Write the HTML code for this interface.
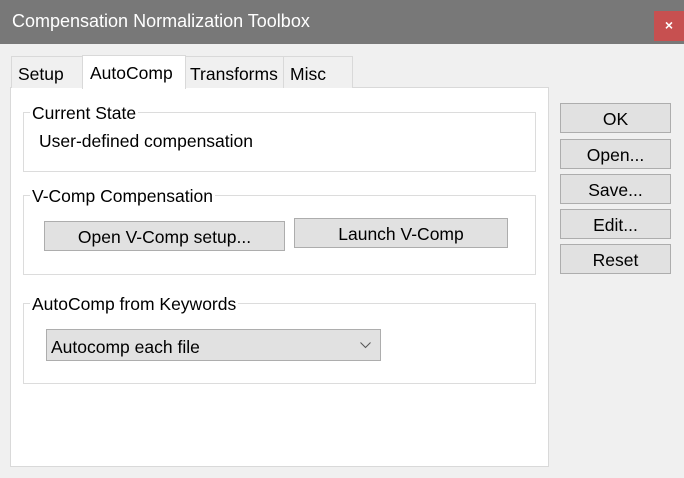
<!DOCTYPE html>
<html><head><style>
*{box-sizing:border-box;margin:0;padding:0}
body{width:684px;height:478px;background:#f0f0f0;font-family:"Liberation Sans","DejaVu Sans",sans-serif;font-size:17.5px;color:#000;position:relative;overflow:hidden}
.a{position:absolute;white-space:nowrap}
.title{left:0;top:0;width:684px;height:44px;background:#787878;color:#fff;font-size:18px;padding:11px 0 0 12px}
.close{left:654px;top:11px;width:30px;height:30px;background:#c75050;color:#fff;font-weight:bold;font-size:14px;text-align:center;line-height:29px}
.tab{top:56px;height:32px;border:1px solid #d9d9d9;border-bottom:none;background:#f0f0f0;padding:7px 0 0 6px}
.panel{left:10px;top:87px;width:539px;height:380px;background:#fff;border:1px solid #d9d9d9}
.grp{border:1px solid #dcdcdc}
.lbl{background:#fff;padding:0 2px}
.btn{background:#e1e1e1;border:1px solid #adadad;text-align:center}
</style></head><body>
<div class="a title">Compensation Normalization Toolbox</div>
<div class="a close">×</div>
<div class="a panel"></div>
<div class="a tab" style="left:11px;width:72px">Setup</div>
<div class="a tab" style="left:82px;top:55px;width:104px;height:34px;background:#fff;padding-top:7px;padding-left:7px">AutoComp</div>
<div class="a tab" style="left:185px;width:99px;padding-left:4px">Transforms</div>
<div class="a tab" style="left:283px;width:70px">Misc</div>

<div class="a grp" style="left:23px;top:112px;width:513px;height:60px"></div>
<div class="a lbl" style="left:30px;top:103px">Current State</div>
<div class="a" style="left:39px;top:131px">User-defined compensation</div>

<div class="a grp" style="left:23px;top:195px;width:513px;height:80px"></div>
<div class="a lbl" style="left:30px;top:186px">V-Comp Compensation</div>
<div class="a btn" style="left:44px;top:221px;width:241px;height:30px;padding-top:5px">Open V-Comp setup...</div>
<div class="a btn" style="left:294px;top:218px;width:214px;height:30px;padding-top:5px">Launch V-Comp</div>

<div class="a grp" style="left:23px;top:303px;width:513px;height:81px"></div>
<div class="a lbl" style="left:30px;top:294px">AutoComp from Keywords</div>
<div class="a btn" style="left:46px;top:329px;width:335px;height:32px;text-align:left;padding:7px 0 0 4px">Autocomp each file
<svg style="position:absolute;right:9px;top:12px" width="11" height="7" viewBox="0 0 11 7"><path d="M0.5 0.5 L5.5 5.5 L10.5 0.5" fill="none" stroke="#555" stroke-width="1"/></svg></div>

<div class="a btn" style="left:560px;top:103px;width:111px;height:30px;padding-top:5px">OK</div>
<div class="a btn" style="left:560px;top:139px;width:111px;height:30px;padding-top:5px">Open...</div>
<div class="a btn" style="left:560px;top:174px;width:111px;height:30px;padding-top:5px">Save...</div>
<div class="a btn" style="left:560px;top:209px;width:111px;height:30px;padding-top:5px">Edit...</div>
<div class="a btn" style="left:560px;top:244px;width:111px;height:30px;padding-top:5px">Reset</div>
</body></html>
